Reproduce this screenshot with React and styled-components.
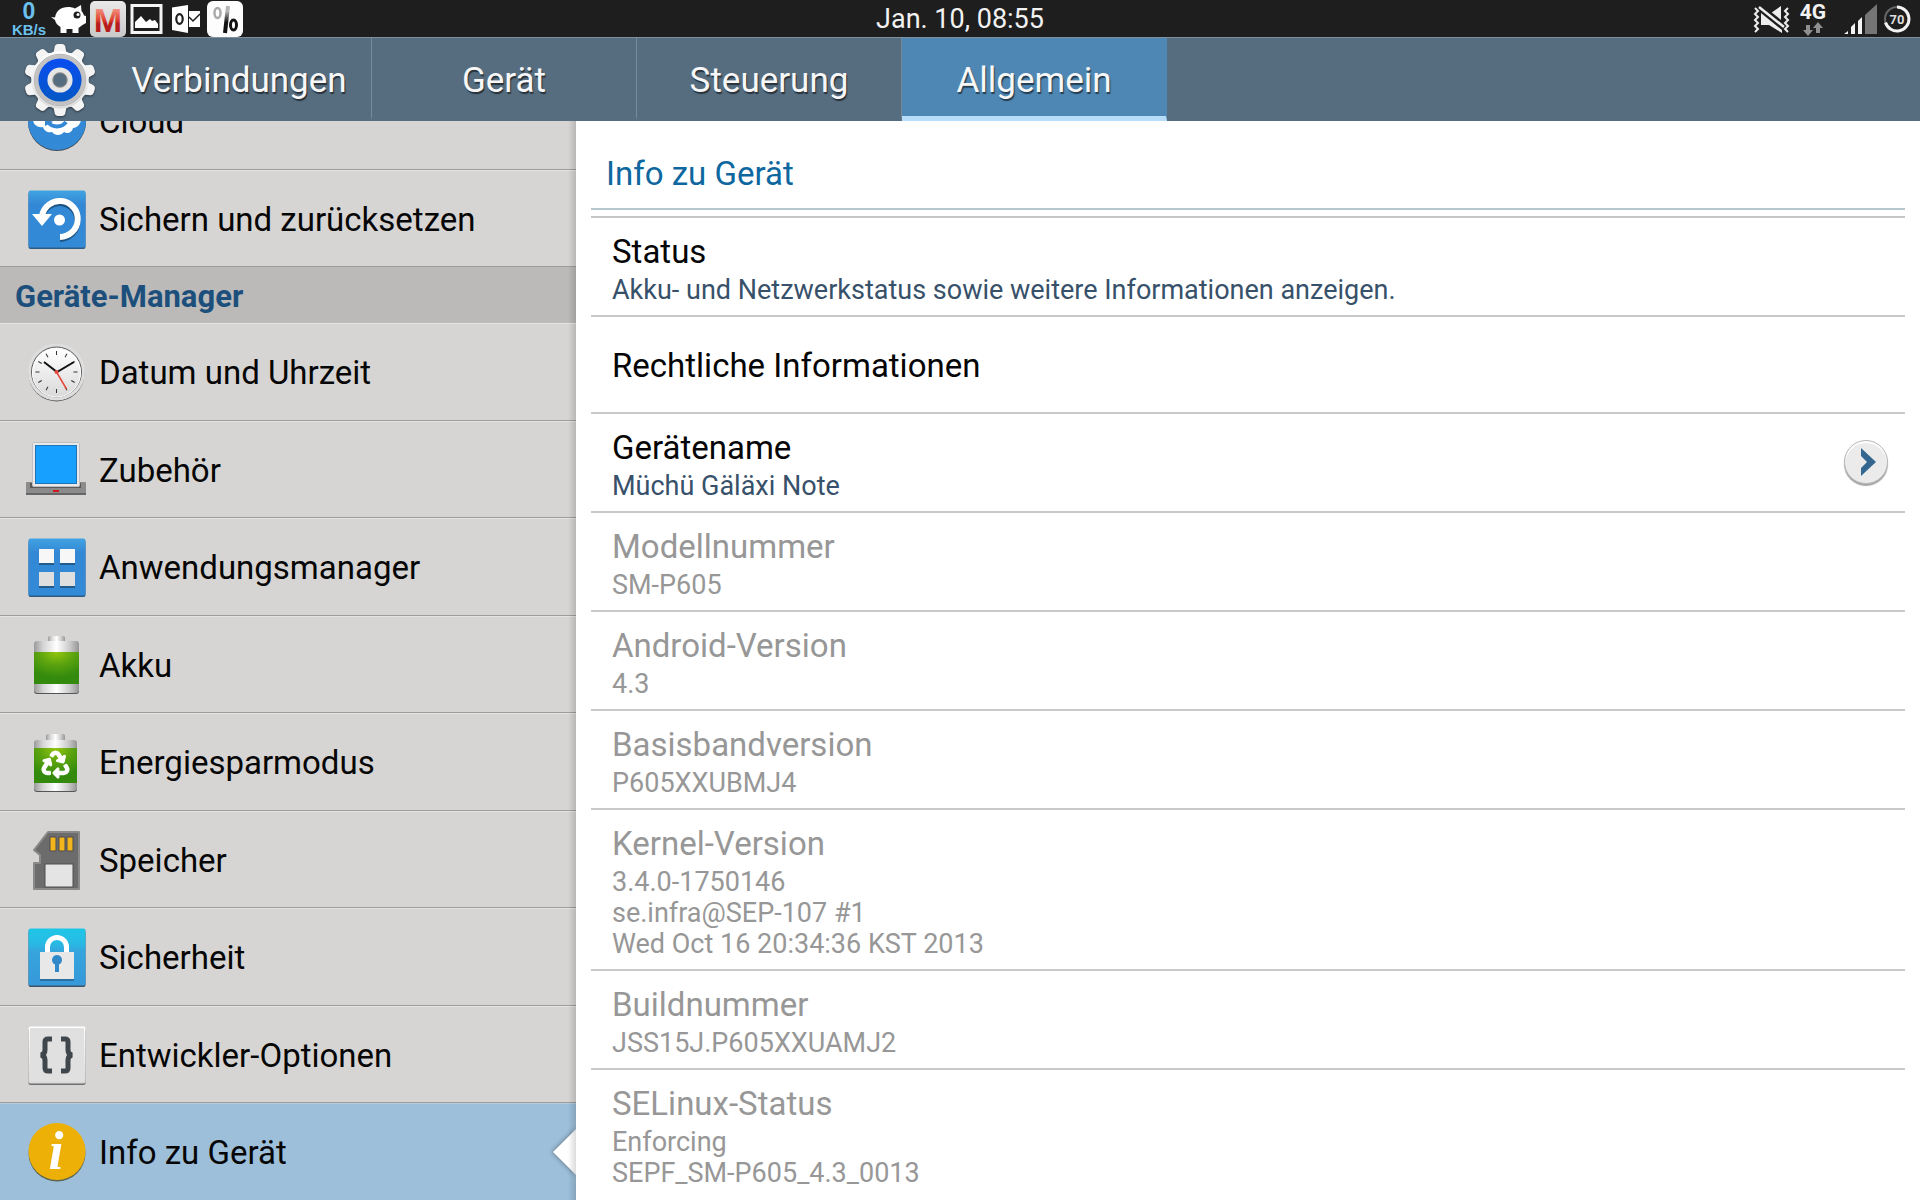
import styled, { createGlobalStyle } from "styled-components";
import { FaRecycle } from "react-icons/fa";

const GlobalStyle = createGlobalStyle`
  * {
    box-sizing: border-box;
  }

  body {
    margin: 0;
    background-color: #ffffff;
    font-family: Roboto, "Noto Sans", sans-serif;
  }

  button {
    margin: 0;
    padding: 0;
    border: 0;
    background: none;
    color: inherit;
    font: inherit;
    cursor: pointer;
  }

  svg {
    display: block;
    flex: none;
    overflow: visible;
  }
`;

const Page = styled.div`
  display: flex;
  flex-direction: column;
  height: 100vh;
  overflow: hidden;
`;

/* status bar */

const StatusBar = styled.header`
  display: grid;
  grid-template-columns: 1fr auto 1fr;
  flex: none;
  height: 37px;
  background-color: #1e1e1e;
  color: #f2f2f2;
`;

const StatusLeft = styled.div`
  display: flex;
  align-items: center;
  gap: 4px;
  padding-left: 11px;
`;

const StatusRight = styled.div`
  display: flex;
  align-items: center;
  justify-content: flex-end;
  gap: 5px;
  padding-right: 9px;
`;

const Speed = styled.div`
  display: flex;
  flex-direction: column;
  align-items: center;
  width: 36px;
  color: #6cc0ee;
  font-family: "Liberation Sans", Arial, sans-serif;
  font-weight: bold;

  strong {
    font-size: 23px;
    line-height: 23px;
  }

  span {
    font-size: 15px;
    line-height: 14px;
  }
`;

const Clock = styled.time`
  padding-top: 1px;
  font-size: 27px;
  line-height: 36px;
`;

const Network = styled.div`
  display: flex;
  flex-direction: column;
  align-items: center;
  width: 34px;
  margin-right: 9px;
  font-size: 21px;
  font-weight: bold;
  line-height: 20px;
`;

/* tabs */

const TabBar = styled.nav`
  display: flex;
  flex: none;
  height: 84px;
  padding-left: 23px;
  border-top: 1px solid #7b90a0;
  background-color: #566d80;
`;

const TabLogo = styled.div`
  display: flex;
  align-items: center;
  width: 84px;
`;

const Tab = styled.button`
  width: 265px;
  border-right: 1px solid ${(props) => (props.$active ? "#4e87b4" : "#74899a")};
  border-bottom: 5px solid ${(props) => (props.$active ? "#b5dcf9" : "#566d80")};
  padding-top: 7px;
  background-color: ${(props) => (props.$active ? "#4e87b4" : "transparent")};
  color: #f7f7f7;
  font-size: 35px;
  text-shadow: 1px 2px 1px rgba(0, 0, 0, 0.55);
`;

/* left list */

const Content = styled.div`
  display: flex;
  flex: 1;
  min-height: 0;
`;

const Sidebar = styled.aside`
  position: relative;
  display: flex;
  flex-direction: column;
  justify-content: flex-end;
  flex: none;
  width: 30%;
  overflow: hidden;
  background-color: #d6d5d3;
`;

const EdgeShadow = styled.div`
  position: absolute;
  top: 0;
  right: 0;
  bottom: 0;
  width: 8px;
  background: linear-gradient(90deg, rgba(0, 0, 0, 0), rgba(0, 0, 0, 0.14));
  pointer-events: none;
`;

const MenuRow = styled.button`
  position: relative;
  display: flex;
  align-items: center;
  flex: none;
  gap: 13px;
  width: 100%;
  height: 98px;
  padding-left: 28px;
  border-top: 1px solid ${(props) => (props.$active ? "#b4cbdc" : "#e6e5e3")};
  border-bottom: 1px solid #9e9d9c;
  background-color: ${(props) => (props.$active ? "#9dbfda" : "transparent")};
  color: #060606;
  font-size: 33px;
  line-height: 40px;
  text-align: left;

  &:nth-of-type(even) {
    height: 97px;
  }

  &:last-of-type {
    height: 97px;
    border-bottom: 0;
  }
`;

const MenuLabel = styled.span`
  padding-top: 2px;
`;

const SectionHeader = styled.h2`
  flex: none;
  margin: 0;
  padding: 3px 15px 0;
  background-color: #bbbab9;
  color: #1d4f7c;
  font-size: 31px;
  font-weight: bold;
  line-height: 53px;
`;

const Notch = styled.svg`
  position: absolute;
  right: 0;
  top: 25px;
  filter: drop-shadow(-1px 0 2px rgba(0, 0, 0, 0.35));
`;

/* right panel */

const Panel = styled.main`
  flex: 1;
  min-width: 0;
  padding: 0 15px;
  overflow: hidden;
  background-color: #ffffff;
`;

const PanelTitle = styled.h1`
  height: 89px;
  margin: 0 0 6px;
  padding: 33px 15px 0;
  border-bottom: 2px solid #b7c7cf;
  color: #0f679f;
  font-size: 33px;
  font-weight: normal;
  line-height: 40px;
`;

const InfoList = styled.ul`
  margin: 0;
  padding: 0;
  border-top: 2px solid #c6c6c6;
  list-style: none;
`;

const InfoRow = styled.li`
  display: flex;
  align-items: center;
  justify-content: space-between;
  min-height: 97px;
  padding: 10px 17px 9px 21px;
  border-bottom: 2px solid #c9c9c9;
  color: ${(props) => (props.$disabled ? "#979797" : "#060606")};

  &:last-child {
    border-bottom: 0;
  }
`;

const InfoTitle = styled.div`
  font-size: 33px;
  line-height: 47px;
`;

const InfoText = styled.div`
  color: ${(props) => (props.$disabled ? "#979797" : "#37516a")};
  font-size: 27px;
  line-height: 31px;
`;

const RoundButton = styled.button`
  display: flex;
  align-items: center;
  justify-content: center;
  width: 44px;
  height: 44px;
  margin-bottom: 3px;
  padding-left: 3px;
  border: 1px solid #b9b9b9;
  border-radius: 50%;
  background-color: #ebebeb;
  box-shadow: inset 0 2px 1px #ffffff, 0 2px 1px #a5a5a5;
`;

/* status bar drawings */

const PigIcon = () => (
  <svg width="35" height="30" viewBox="0 0 35 30" fill="#fff">
    <path d="M0 13l4 .5C5 7 10 3 17 3c3 0 5 .5 7 1.500L30 1l.5 6c1 1 2 3 2.500 4.500L35 12v7l-3.500 2-4 3v5h-6v-4h-6v4h-6v-6c-3-2-5-4-5.500-7z" />
    <circle cx="26" cy="11" r="3.500" fill="#1e1e1e" />
    <circle cx="27" cy="10.500" r="1.500" fill="#fff" />
  </svg>
);

const TileDefs = () => (
  <defs>
    <linearGradient id="tile" x1="0" y1="0" x2="0" y2="1">
      <stop offset="0" stopColor="#e9e9e9" />
      <stop offset="1" stopColor="#c9c9c9" />
    </linearGradient>
    <linearGradient id="redLetter" x1="0" y1="0" x2="0" y2="1">
      <stop offset="0.2" stopColor="#f29484" />
      <stop offset="0.5" stopColor="#e0402c" />
      <stop offset="0.6" stopColor="#b81c1c" />
    </linearGradient>
    <linearGradient id="percent" x1="0" y1="0" x2="0" y2="1">
      <stop offset="0.2" stopColor="#b5b5b5" />
      <stop offset="0.6" stopColor="#111" />
    </linearGradient>
  </defs>
);

const LetterTile = () => (
  <svg width="36" height="36" viewBox="0 0 36 36">
    <TileDefs />
    <rect width="36" height="36" rx="5" fill="url(#tile)" />
    <text
      x="18"
      y="31"
      fill="url(#redLetter)"
      fontFamily="Liberation Sans, sans-serif"
      fontSize="34"
      fontWeight="bold"
      textAnchor="middle"
    >
      M
    </text>
  </svg>
);

const PictureIcon = () => (
  <svg width="33" height="30" viewBox="0 0 33 30">
    <rect x="2" y="1.500" width="29" height="27" fill="none" stroke="#f4f4f4" strokeWidth="3" />
    <path d="M5 24v-6l6-6 5 6 4-3 2 2 3-1 3 4v4z" fill="#fff" />
  </svg>
);

const MailIcon = () => (
  <svg width="36" height="28" viewBox="-5 0 36 28">
    <path d="M0 2.500L16 0v28L0 25z" fill="#fff" />
    <path d="M17 6h11v16H17z" fill="#fff" />
    <path d="M17 12l4 4 7-7" fill="none" stroke="#1e1e1e" strokeWidth="1.500" />
    <ellipse cx="7.500" cy="14" rx="3.200" ry="4.800" fill="none" stroke="#1e1e1e" strokeWidth="2.200" />
  </svg>
);

const PercentTile = () => (
  <svg width="36" height="36" viewBox="0 0 36 36">
    <rect width="36" height="36" rx="6" fill="#fdfdfd" />
    <g fill="none" stroke="url(#percent)">
      <ellipse cx="10.500" cy="12" rx="3" ry="5" stroke="#aaa" strokeWidth="2.500" />
      <path d="M21 5l-3 27" strokeWidth="4" />
      <ellipse cx="26.500" cy="24" rx="3" ry="5" stroke="#111" strokeWidth="3" />
    </g>
  </svg>
);

const MuteIcon = () => (
  <svg width="38" height="28" viewBox="0 0 38 28" fill="#ededed">
    <path d="M28 1v16L18 8zM8 8l21 17v3L16 20H8z" />
    <path d="M6 1l26 21" stroke="#1e1e1e" strokeWidth="6" />
    <path d="M6 2l25 20" stroke="#ededed" strokeWidth="2.500" />
    <path
      d="M2 3l3 3-3 3 3 3-3 3 3 3-3 3 3 3-3 3M35 3l-3 3 3 3-3 3 3 3-3 3 3 3-3 3 3 3"
      fill="none"
      stroke="#ededed"
      strokeWidth="2"
    />
  </svg>
);

const ArrowsIcon = () => (
  <svg width="20" height="14" viewBox="0 0 20 14" fill="#8f8f8f">
    <path d="M3 3h4v5h3l-5 6-5-6h3zM13 11h4V6h3l-5-6-5 6h3z" />
  </svg>
);

const SignalIcon = () => (
  <svg width="34" height="30" viewBox="0 0 34 30">
    <path d="M0 30l4-3v3zM7 30v-7l4-4v11zM14 30V17l4-4v17z" fill="#f4f4f4" />
    <path d="M21 30V11L33 0v30z" fill="#757575" />
  </svg>
);

const BatteryRing = () => (
  <svg width="28" height="28" viewBox="0 0 28 28">
    <circle cx="14" cy="14" r="12" fill="none" stroke="#666" strokeWidth="2" />
    <path d="M14 2a12 12 0 1 1-11.500 15.500" fill="none" stroke="#f2f2f2" strokeWidth="3" />
    <text x="14" y="18.500" fill="#ddd" fontSize="13" fontWeight="bold" textAnchor="middle">
      70
    </text>
  </svg>
);

/* settings drawings */

const gearTeeth = [0, 36, 72, 108, 144, 180, 216, 252, 288, 324];

const GearLogo = () => (
  <svg width="74" height="74" viewBox="0 0 72 72">
    <defs>
      <linearGradient id="gear" x1="0" y1="0" x2="0" y2="1">
        <stop offset="0" stopColor="#ffffff" />
        <stop offset="1" stopColor="#dcdcdc" />
      </linearGradient>
      <linearGradient id="gearBlue" x1="0" y1="0" x2="0" y2="1">
        <stop offset="0" stopColor="#0a4df2" />
        <stop offset="1" stopColor="#0458c4" />
      </linearGradient>
    </defs>
    <g filter="drop-shadow(0 1px 1px rgba(0,0,0,.5))">
      {gearTeeth.map((angle) => (
        <path
          key={angle}
          d="M26 12l4-4 1-5q1-2 3-2h4q2 0 3 2l1 5 4 4z"
          fill="#f4f4f4"
          transform={`rotate(${angle} 36 36)`}
        />
      ))}
      <circle cx="36" cy="36" r="28" fill="url(#gear)" />
    </g>
    <circle cx="36" cy="36" r="25" fill="#e6e6e6" stroke="#b4b4b4" />
    <circle cx="36" cy="36" r="22.500" fill="none" stroke="#c2c2c2" strokeWidth="4" />
    <circle cx="36" cy="36" r="21" fill="url(#gearBlue)" />
    <circle cx="36" cy="36" r="9.500" fill="#566d80" stroke="#e6e6e6" strokeWidth="5.500" />
    <circle cx="36" cy="36" r="7" fill="#566d80" stroke="#8d8d8d" strokeWidth="1" />
  </svg>
);

const HiddenSvg = styled.svg`
  position: absolute;
`;

const IconDefs = () => (
  <HiddenSvg width="0" height="0">
    <defs>
      <linearGradient id="blue" x1="0" y1="0" x2="0" y2="1">
        <stop offset="0" stopColor="#41a3e2" />
        <stop offset="0.25" stopColor="#3388d5" />
        <stop offset="1" stopColor="#338ad6" />
      </linearGradient>
      <linearGradient id="cyan" x1="0" y1="0" x2="0" y2="1">
        <stop offset="0" stopColor="#1fc6e6" />
        <stop offset="0.25" stopColor="#27bbe4" />
        <stop offset="0.4" stopColor="#36a5de" />
        <stop offset="1" stopColor="#3698d9" />
      </linearGradient>
      <linearGradient id="light" x1="0" y1="0" x2="0" y2="1">
        <stop offset="0" stopColor="#ffffff" />
        <stop offset="1" stopColor="#d9d9d9" />
      </linearGradient>
      <linearGradient id="metal" x1="0" y1="0" x2="1" y2="0">
        <stop offset="0" stopColor="#9a9a9a" />
        <stop offset="0.2" stopColor="#d4d4d4" />
        <stop offset="0.5" stopColor="#ffffff" />
        <stop offset="0.8" stopColor="#c9c9c9" />
        <stop offset="1" stopColor="#959595" />
      </linearGradient>
      <radialGradient id="green" cx="0.5" cy="0" r="0.8">
        <stop offset="0" stopColor="#93c60f" />
        <stop offset="0.5" stopColor="#5ba30f" />
        <stop offset="1" stopColor="#338a0c" />
      </radialGradient>
    </defs>
  </HiddenSvg>
);

const Icon = ({ children }) => (
  <svg width="58" height="58" viewBox="0 0 58 58">
    {children}
  </svg>
);

const BlueTile = ({ fill = "url(#blue)", edge = "#2c5c86" }) => (
  <>
    <rect x="0.500" y="2" width="57" height="57" rx="2" fill={edge} />
    <rect x="0.500" y="0.500" width="57" height="57" rx="2" fill={fill} />
  </>
);

const CloudIcon = () => (
  <Icon>
    <circle cx="29" cy="30" r="29" fill="#3d4a55" />
    <circle cx="29" cy="29" r="29" fill="url(#blue)" />
    <path
      d="M5 27a10 10 0 0 1 9-12 14 14 0 0 1 28 0c7 0 11 6 11 12 0 5-4 9-8 9-1 5-6 6-9 4-3 4-9 4-12 0-4 1-8-1-9-5-5 1-10-2-10-8z"
      fill="#fff"
    />
    <path d="M20 30c4 6 14 6 18 0" fill="none" stroke="#3389d5" strokeWidth="4" />
    <path d="M17 34v-8l8 4z" fill="#3389d5" />
  </Icon>
);

const BackupIcon = () => (
  <Icon>
    <BlueTile />
    <path
      d="M14 26A18 18 0 1 1 32 48"
      fill="none"
      stroke="#1f5482"
      strokeWidth="6"
      transform="translate(0 1)"
    />
    <path d="M14 26A18 18 0 1 1 32 47" fill="none" stroke="#fff" strokeWidth="6" />
    <path d="M4 24h20L14 36z" fill="#fff" />
    <circle cx="31.500" cy="30" r="5.500" fill="#fff" />
  </Icon>
);

const clockTicks = [0, 30, 60, 90, 120, 150, 180, 210, 240, 270, 300, 330];

const ClockIcon = () => (
  <Icon>
    <circle cx="28.500" cy="30.500" r="28" fill="#5d5d5d" />
    <circle cx="28.500" cy="29" r="28.500" fill="#dedede" />
    <circle cx="28.500" cy="29" r="25" fill="#f6f6f6" stroke="#5c5c5c" />
    <circle cx="28.500" cy="30" r="24" fill="url(#light)" stroke="#fff" />
    {clockTicks.map((angle) => (
      <path key={angle} d="M28.500 8v4" stroke="#333" transform={`rotate(${angle} 28.500 29)`} />
    ))}
    <path d="M16 19l13 10 17-10" fill="none" stroke="#111" strokeWidth="2" />
    <path d="M28.500 29l10 17" stroke="#e8483c" strokeWidth="1.500" />
    <circle cx="28.500" cy="29" r="2" fill="#e8483c" />
  </Icon>
);

const DeviceIcon = () => (
  <Icon>
    <rect x="-2" y="41" width="60" height="13" rx="1" fill="#8b8b8b" />
    <path d="M-2 53h60" stroke="#666" strokeWidth="2" />
    <rect x="2" y="42" width="51" height="5" fill="#5a5a5a" />
    <rect x="4.500" y="1.500" width="47" height="44" rx="1" fill="#e9e9e9" stroke="#c0c0c0" />
    <rect x="7.500" y="4.500" width="41" height="38" fill="#17a0ff" stroke="#1d74b8" />
    <rect x="25" y="49" width="6" height="2" fill="#d01818" />
  </Icon>
);

const AppsIcon = () => (
  <Icon>
    <BlueTile />
    <path d="M11 13h15v14H11zM32 13h15v14H32zM11 36h15v14H11zM32 36h15v14H32z" fill="#235b8d" />
    <path d="M11 11h15v14H11zM32 11h15v14H32z" fill="#f7f7f7" />
    <path d="M11 34h15v14H11zM32 34h15v14H32z" fill="#dfdfdf" />
  </Icon>
);

const BatteryIcon = () => (
  <Icon>
    <rect x="20" y="0" width="17" height="8" rx="2" fill="url(#metal)" />
    <rect x="6" y="7" width="45" height="51" rx="3" fill="#555" />
    <rect x="6" y="5" width="45" height="52" rx="3" fill="url(#metal)" />
    <rect x="6" y="16" width="45" height="32" fill="url(#green)" />
  </Icon>
);

const SavingIcon = () => (
  <Icon>
    <rect x="18" y="1" width="19" height="8" rx="2" fill="url(#metal)" />
    <rect x="6" y="9" width="43" height="50" rx="3" fill="#555" />
    <rect x="6" y="7" width="43" height="51" rx="3" fill="url(#metal)" />
    <rect x="6" y="15" width="43" height="35" fill="url(#green)" />
    <FaRecycle x="14" y="18" size={27} color="#fff" stroke="#fff" strokeWidth="20" />
  </Icon>
);

const StorageIcon = () => (
  <Icon>
    <path
      d="M20 1h31v57H6V32h6v-8l-6-5z"
      fill="#6c6c6c"
      stroke="#8a8a8a"
      strokeLinejoin="round"
      strokeWidth="2"
    />
    <path d="M22 6h6v14h-6zM31 6h6v14h-6zM39 6h6v14h-6z" fill="#f2b51c" stroke="#4c4c4c" />
    <rect x="17" y="33" width="28" height="23" fill="#e4e4e4" stroke="#4f4f4f" />
  </Icon>
);

const LockIcon = () => (
  <Icon>
    <BlueTile fill="url(#cyan)" edge="#3c5568" />
    <path d="M12 26h34v27H12z" fill="#2a6f9f" />
    <path d="M19.500 26v-7a9.500 9.500 0 0 1 19 0v7" fill="none" stroke="#fff" strokeWidth="5" />
    <path d="M12 24h34v27H12z" fill="#e8e8e8" />
    <circle cx="29" cy="32" r="5" fill="#3189c9" />
    <path d="M27 34h4v10h-4z" fill="#3189c9" />
  </Icon>
);

const DeveloperIcon = () => (
  <Icon>
    <BlueTile fill="url(#light)" edge="#6f6f6f" />
    <rect x="2" y="2" width="54" height="54" fill="#e0e0e0" />
    <path
      d="M24 13h-4q-3 0-3 3v8q0 4-4 5 4 1 4 5v8q0 3 3 3h4M33 13h4q3 0 3 3v8q0 4 4 5-4 1-4 5v8q0 3-3 3h-4"
      fill="none"
      stroke="#3f474c"
      strokeWidth="5"
    />
  </Icon>
);

const InfoIcon = () => (
  <Icon>
    <circle cx="29" cy="30" r="28.500" fill="#5d6650" />
    <circle cx="29" cy="28.500" r="28.500" fill="#edb007" />
    <text
      x="28"
      y="46"
      fill="#fff"
      fontFamily="Liberation Serif, serif"
      fontSize="54"
      fontStyle="italic"
      fontWeight="bold"
      textAnchor="middle"
    >
      i
    </text>
  </Icon>
);

const tabs = ["Verbindungen", "Gerät", "Steuerung", "Allgemein"];

const accountItems = [
  { label: "Cloud", icon: CloudIcon },
  { label: "Sichern und zurücksetzen", icon: BackupIcon },
];

const deviceItems = [
  { label: "Datum und Uhrzeit", icon: ClockIcon },
  { label: "Zubehör", icon: DeviceIcon },
  { label: "Anwendungsmanager", icon: AppsIcon },
  { label: "Akku", icon: BatteryIcon },
  { label: "Energiesparmodus", icon: SavingIcon },
  { label: "Speicher", icon: StorageIcon },
  { label: "Sicherheit", icon: LockIcon },
  { label: "Entwickler-Optionen", icon: DeveloperIcon },
  { label: "Info zu Gerät", icon: InfoIcon, active: true },
];

const infos = [
  { title: "Status", lines: ["Akku- und Netzwerkstatus sowie weitere Informationen anzeigen."] },
  { title: "Rechtliche Informationen", lines: [] },
  { title: "Gerätename", lines: ["Müchü Gäläxi Note"], editable: true },
  { title: "Modellnummer", lines: ["SM-P605"], disabled: true },
  { title: "Android-Version", lines: ["4.3"], disabled: true },
  { title: "Basisbandversion", lines: ["P605XXUBMJ4"], disabled: true },
  {
    title: "Kernel-Version",
    lines: ["3.4.0-1750146", "se.infra@SEP-107 #1", "Wed Oct 16 20:34:36 KST 2013"],
    disabled: true,
  },
  { title: "Buildnummer", lines: ["JSS15J.P605XXUAMJ2"], disabled: true },
  { title: "SELinux-Status", lines: ["Enforcing", "SEPF_SM-P605_4.3_0013"], disabled: true },
];

const MenuItem = ({ item }) => {
  const ItemIcon = item.icon;

  return (
    <MenuRow $active={item.active}>
      <ItemIcon />
      <MenuLabel>{item.label}</MenuLabel>
      {item.active ? (
        <Notch width="23" height="46" viewBox="0 0 23 46">
          <path d="M23 0v46L0 23z" fill="#fff" />
        </Notch>
      ) : (
        ""
      )}
    </MenuRow>
  );
};

const App = () => {
  return (
    <Page>
      <GlobalStyle />
      <IconDefs />

      <StatusBar>
        <StatusLeft>
          <Speed>
            <strong>0</strong>
            <span>KB/s</span>
          </Speed>
          <PigIcon />
          <LetterTile />
          <PictureIcon />
          <MailIcon />
          <PercentTile />
        </StatusLeft>
        <Clock>Jan. 10, 08:55</Clock>
        <StatusRight>
          <MuteIcon />
          <Network>
            4G
            <ArrowsIcon />
          </Network>
          <SignalIcon />
          <BatteryRing />
        </StatusRight>
      </StatusBar>

      <TabBar>
        <TabLogo>
          <GearLogo />
        </TabLogo>
        {tabs.map((tab) => (
          <Tab key={tab} $active={tab === "Allgemein"}>
            {tab}
          </Tab>
        ))}
      </TabBar>

      <Content>
        <Sidebar>
          {accountItems.map((item) => (
            <MenuItem key={item.label} item={item} />
          ))}
          <SectionHeader>Geräte-Manager</SectionHeader>
          {deviceItems.map((item) => (
            <MenuItem key={item.label} item={item} />
          ))}
          <EdgeShadow />
        </Sidebar>

        <Panel>
          <PanelTitle>Info zu Gerät</PanelTitle>
          <InfoList>
            {infos.map((info) => (
              <InfoRow key={info.title} $disabled={info.disabled}>
                <div>
                  <InfoTitle>{info.title}</InfoTitle>
                  {info.lines.map((line) => (
                    <InfoText key={line} $disabled={info.disabled}>
                      {line}
                    </InfoText>
                  ))}
                </div>
                {info.editable ? (
                  <RoundButton aria-label="Gerätename ändern">
                    <svg width="16" height="28" viewBox="0 0 16 28">
                      <path d="M1 0l15 14L1 28v-8l6-6-6-6z" fill="#33678f" />
                    </svg>
                  </RoundButton>
                ) : (
                  ""
                )}
              </InfoRow>
            ))}
          </InfoList>
        </Panel>
      </Content>
    </Page>
  );
};

export default App;
